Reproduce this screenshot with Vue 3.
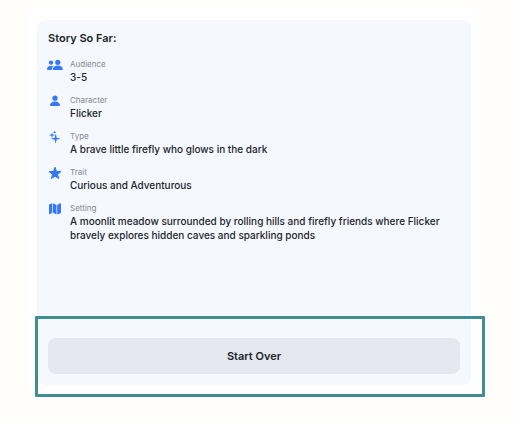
<script setup>
const items = [
  { icon: 'group', label: 'Audience', value: '3-5' },
  { icon: 'person', label: 'Character', value: 'Flicker' },
  { icon: 'sparkles', label: 'Type', value: 'A brave little firefly who glows in the dark' },
  { icon: 'star', label: 'Trait', value: 'Curious and Adventurous' },
  {
    icon: 'map',
    label: 'Setting',
    value:
      'A moonlit meadow surrounded by rolling hills and firefly friends where Flicker bravely explores hidden caves and sparkling ponds',
  },
]
</script>

<template>
  <main class="page">
    <div class="panel">
      <section class="card">
        <h1 class="title">Story So Far:</h1>
        <dl class="list">
          <div v-for="item in items" :key="item.label" class="row">
            <svg class="icon" viewBox="0 0 16 16" aria-hidden="true">
              <g v-if="item.icon === 'group'">
                <circle cx="4" cy="5.6" r="2.200" />
                <path d="M0 12.300C0 10.100 1.800 8.700 4.200 8.700C5.100 8.700 5.800 8.900 6.400 9.200C5.300 10.200 4.700 11.500 4.700 13H.7Q0 13 0 12.300Z" />
                <circle cx="10.800" cy="5.300" r="2.600" />
                <path d="M5.700 12.200C5.900 10 7.900 8.500 10.800 8.500S15.600 10 15.800 12.200Q15.800 13 15 13H6.500Q5.700 13 5.700 12.200Z" />
              </g>
              <g v-else-if="item.icon === 'person'">
                <circle cx="8" cy="5.200" r="2.600" />
                <path d="M3 12.200C3.200 10 5.200 8.500 8 8.500S12.800 10 13 12.200Q13 13 12.200 13H3.800Q3 13 3 12.200Z" />
              </g>
              <g v-else-if="item.icon === 'sparkles'">
                <path d="M8.700 4.900Q9.100 5.100 9.600 8.700Q12.900 9.200 13.100 9.700Q12.900 10.200 9.600 10.600Q9.100 14.200 8.700 14.400Q8.200 14.200 7.700 10.600Q4.400 10.200 4.200 9.700Q4.400 9.200 7.700 8.700Q8.200 5.100 8.700 4.900Z" />
                <path d="M5 3.500Q5.300 3.700 5.600 5.600Q7.500 5.900 7.700 6.200Q7.500 6.500 5.600 6.800Q5.300 8.700 5 8.900Q4.700 8.700 4.400 6.800Q2.500 6.500 2.300 6.200Q2.500 5.900 4.400 5.600Q4.700 3.700 5 3.500Z" />
                <path d="M7.700 1.800Q8 3 9.300 3.300Q8 3.600 7.700 4.800Q7.400 3.600 6.100 3.300Q7.400 3 7.700 1.800Z" />
              </g>
              <path
                v-else-if="item.icon === 'star'"
                class="star"
                d="M8 2.200L9.500 6.500L14 6.600L10.400 9.300L11.700 13.600L8 11.100L4.300 13.600L5.600 9.300L2 6.600L6.500 6.500Z"
              />
              <g v-else>
                <path d="M2 4.100Q2 3.500 2.500 3.300L5.300 2.200V11.700L2.900 13Q2 13.400 2 12.600Z" />
                <path d="M6 2.200L9.500 3.900V13.400L6 11.700Z" />
                <path d="M10.200 3.900L13.100 2.300Q14 1.900 14 2.800V11.500Q14 12 13.600 12.200L10.200 13.400Z" />
              </g>
            </svg>
            <div class="text">
              <dt class="label">{{ item.label }}</dt>
              <dd class="value">{{ item.value }}</dd>
            </div>
          </div>
        </dl>
        <div class="actions">
          <button type="button" class="restart">Start Over</button>
        </div>
      </section>
    </div>
  </main>
</template>

<style>
body {
  margin: 0;
  background: #fffefa;
}
</style>

<style scoped>
.page {
  box-sizing: border-box;
  display: flex;
  min-height: 100vh;
  padding: 5px 38px 26px 29px;
  font-family: Inter, "Liberation Sans", sans-serif;
  color: #222429;
}

.panel {
  display: flex;
  flex: 1;
  padding: 15px 7px 11px 8px;
  background: #fff;
}

.card {
  display: flex;
  flex: 1;
  flex-direction: column;
  box-sizing: border-box;
  padding: 10px 11px 11px;
  border-radius: 8px;
  background: #f5f8ff;
}

.title {
  margin: 0;
  font-size: 11px;
  font-weight: 600;
  line-height: 16px;
}

.list {
  display: flex;
  flex-direction: column;
  gap: 10px;
  margin: 12px 0 24px;
}

.row {
  display: flex;
  gap: 7px;
  margin-left: -1px;
}

.icon {
  flex: none;
  width: 16px;
  height: 16px;
  margin-top: -1px;
  fill: #3478f6;
}

.star {
  stroke: #3478f6;
  stroke-width: 1;
  stroke-linejoin: round;
}

.text {
  flex: 1;
}

.label {
  font-size: 8px;
  line-height: 12px;
  color: #85888f;
}

.value {
  margin: 0;
  font-size: 10px;
  font-weight: 500;
  line-height: 14px;
}

.actions {
  position: relative;
  margin-top: auto;
}

.actions::after {
  content: "";
  position: absolute;
  inset: -22px -25px -23px -13px;
  border: 3px solid #408e91;
  border-radius: 1px;
  pointer-events: none;
}

.restart {
  display: block;
  width: 100%;
  padding: 10px;
  border: 0;
  border-radius: 8px;
  background: #e4e7ef;
  color: inherit;
  font: 600 11px/16px Inter, "Liberation Sans", sans-serif;
  cursor: pointer;
}
</style>
